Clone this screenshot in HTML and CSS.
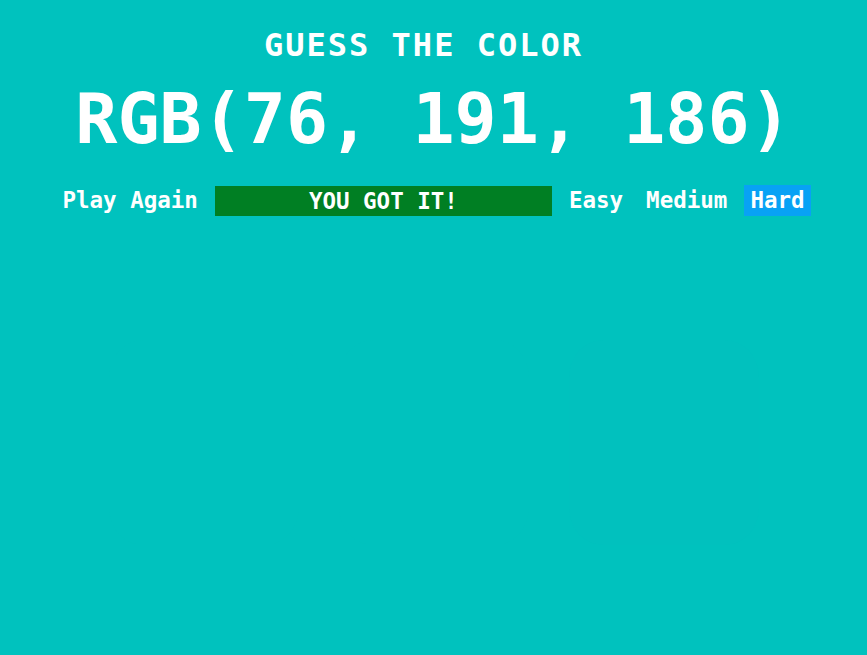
FILE: index.html
```html
<!DOCTYPE html>
<html>
<head>
<meta charset="utf-8">
<link rel="stylesheet" href="styles.css">
</head>
<body>
<header class="header">
  <h1 class="title">Guess the color</h1>
  <div class="color-display">RGB(76, 191, 186)</div>
</header>
<nav class="stripe">
  <button class="btn">Play Again</button>
  <span class="message">YOU GOT IT!</span>
  <button class="btn">Easy</button>
  <button class="btn">Medium</button>
  <button class="btn selected">Hard</button>
</nav>
<main class="grid">
  <div class="square"></div>
  <div class="square"></div>
  <div class="square faint"></div>
</main>
</body>
</html>
```

FILE: styles.css
```css
html, body {
  margin: 0;
  padding: 0;
}
body {
  background: #00c2be;
  color: #ffffff;
  font-family: "DejaVu Sans Mono", "Liberation Mono", monospace;
  font-weight: bold;
  height: 655px;
  overflow: hidden;
}
.header {
  display: flex;
  flex-direction: column;
  align-items: center;
}
.title {
  margin: 0;
  padding-top: 26px;
  padding-right: 20px;
  font-size: 32px;
  line-height: 38px;
  letter-spacing: 2px;
  text-transform: uppercase;
  font-weight: bold;
}
.color-display {
  margin-top: 10px;
  font-size: 70px;
  line-height: 90px;
}
.stripe {
  margin-top: 21px;
  display: flex;
  justify-content: center;
  align-items: center;
  gap: 11px;
  height: 31px;
}
.btn {
  font-family: inherit;
  font-weight: bold;
  font-size: 22.5px;
  color: #ffffff;
  background: none;
  border: none;
  padding: 0 6px;
  height: 31px;
  line-height: 31px;
}
.selected {
  background: #08a2f5;
}
.message {
  width: 337px;
  height: 30px;
  line-height: 30px;
  background: #007f23;
  text-align: center;
  font-size: 22.5px;
}
.grid {
  margin: 124px auto 0;
  width: 650px;
  display: grid;
  grid-template-columns: repeat(3, 190px);
  gap: 40px;
}
.square {
  height: 205px;
  border-radius: 18%;
  background: #00c2be;
}
.square.faint {
  background: #01c1be;
}
```
